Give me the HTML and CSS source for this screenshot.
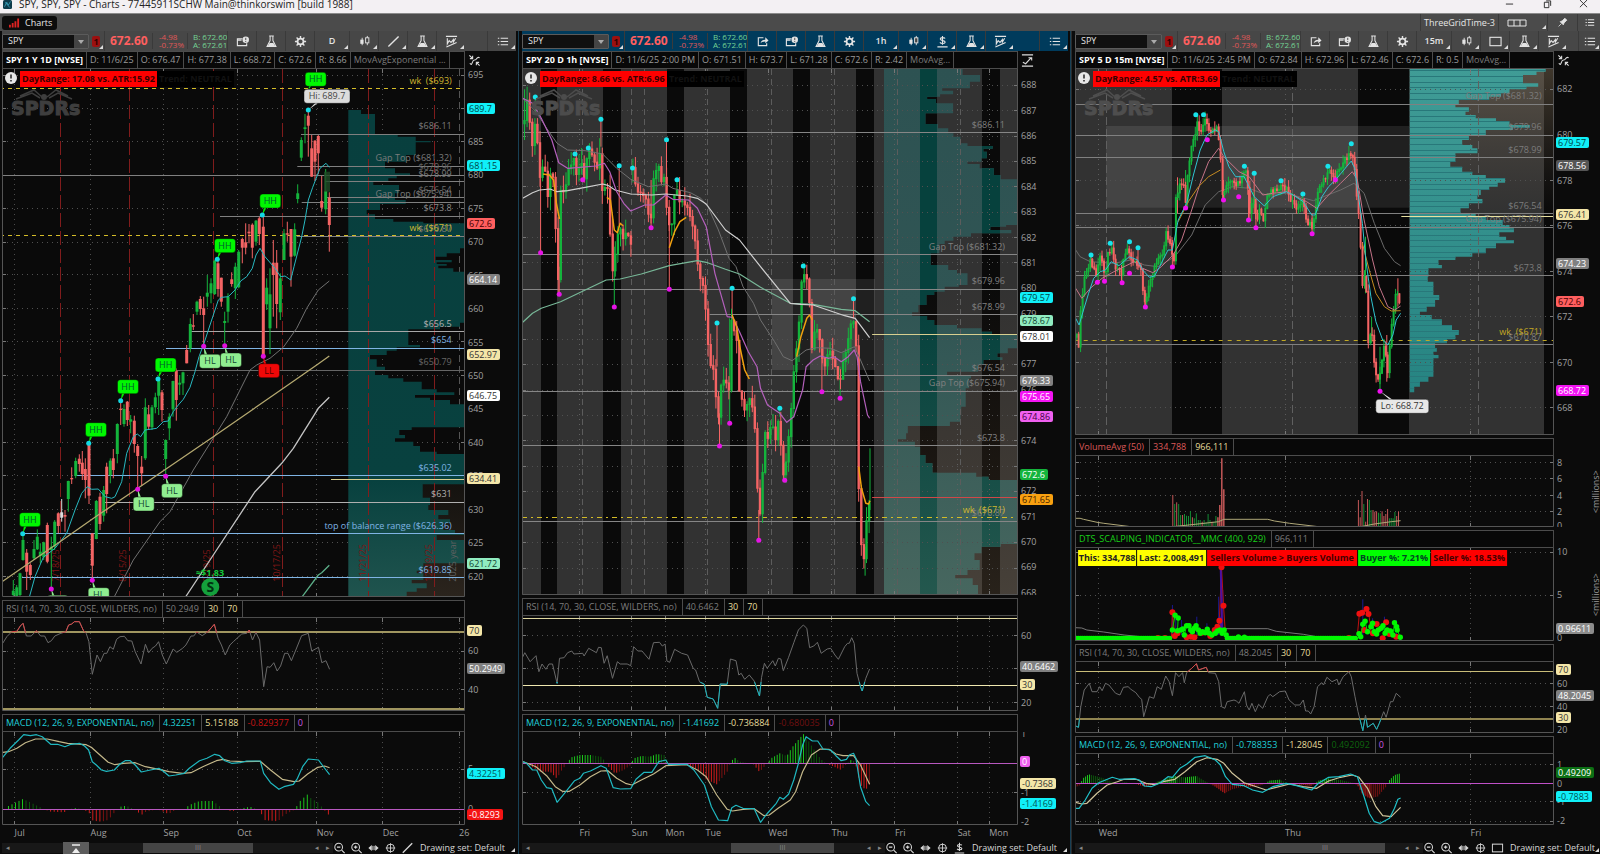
FILE: index.html
```html
<!DOCTYPE html>
<html lang="en">
<head>
<meta charset="utf-8">
<title>Charts</title>
<link rel="stylesheet" href="styles.css">
</head>
<body>
<svg class="defs" aria-hidden="true">
  <symbol id="i-share" viewBox="0 0 14 14"><path d="M8 3H2.500v8.500h9V9" fill="none" stroke="currentColor" stroke-width="1.200"/><path d="M5 9c.3-2.500 2-4 5-4V2.500L13.500 6 10 9V7C8 7 6.300 7.500 5 9z" fill="currentColor"/></symbol>
  <symbol id="i-cal" viewBox="0 0 14 14"><path d="M7 4H1.500v7.500h10V9M1.500 5.500H6" fill="none" stroke="currentColor" stroke-width="1.200"/><circle cx="10.500" cy="5" r="3.500" fill="currentColor"/><path d="M10.500 3v2.500M10 7h1" stroke="#444" stroke-width="1"/></symbol>
  <symbol id="i-flask" viewBox="0 0 14 14"><path d="M4.500 1h5M5.500 1v5L2.200 12.500h9.600L8.500 6V1" fill="none" stroke="currentColor" stroke-width="1.100"/><path d="M5 8.500h4l2.300 4H2.700z" fill="currentColor"/></symbol>
  <symbol id="i-gear" viewBox="0 0 14 14"><circle cx="7" cy="7" r="3.200" fill="none" stroke="currentColor" stroke-width="1.900"/><path d="M7 1v2.200M7 10.800V13M1 7h2.200M10.800 7H13M2.800 2.800l1.500 1.500M9.700 9.700l1.500 1.500M11.200 2.800L9.700 4.300M4.300 9.700l-1.500 1.500" stroke="currentColor" stroke-width="1.500"/></symbol>
  <symbol id="i-candle" viewBox="0 0 14 14"><path d="M4.500 3v8M10 1v10" stroke="currentColor"/><rect x="2.500" y="5" width="3.500" height="4.500" fill="currentColor"/><rect x="8.200" y="3" width="3.500" height="5.500" fill="#444" stroke="currentColor"/></symbol>
  <symbol id="i-line" viewBox="0 0 14 14"><path d="M1.500 12.500l11-11" stroke="currentColor" stroke-width="1.500"/></symbol>
  <symbol id="i-dollar" viewBox="0 0 14 14"><path d="M9.800 3.800C9 2.600 4.600 2.200 4.600 4.400c0 2.200 5.200 1.200 5.200 3.200 0 2.200-4.600 1.800-5.600.4M7 1v9.500M1.500 12.800h11" fill="none" stroke="currentColor" stroke-width="1.200"/></symbol>
  <symbol id="i-rect" viewBox="0 0 14 14"><rect x="1" y="2.500" width="12" height="9" fill="none" stroke="currentColor" stroke-width="1.200"/></symbol>
  <symbol id="i-study" viewBox="0 0 14 14"><path d="M1 1.500h12M2.500 3.500v6l2-3.500 2 2 2.500-3v2.500l2.500-4M1.500 13L12.500 8" fill="none" stroke="currentColor" stroke-width="1.200"/></symbol>
  <symbol id="i-list" viewBox="0 0 14 14"><path d="M5 3.500h8M5 7h8M5 10.500h8M2 3.500h1.500M2 7h1.500M2 10.500h1.500" stroke="currentColor" stroke-width="1.300"/></symbol>
  <symbol id="i-pin" viewBox="0 0 14 14"><path d="M2 12l3.500-3.500M4 6l4 4 1-2.500L12.500 4 10 1.500 6.500 5z" fill="currentColor" stroke="currentColor"/></symbol>
  <symbol id="i-grid" viewBox="0 0 20 10"><path d="M1 2h18v6H1zM7 2v6M13 2v6" fill="none" stroke="currentColor"/></symbol>
  <symbol id="i-out" viewBox="0 0 14 14"><circle cx="6" cy="6" r="4.500" fill="none" stroke="currentColor" stroke-width="1.200"/><path d="M4 6h4M9.500 9.500L13 13" stroke="currentColor" stroke-width="1.300"/></symbol>
  <symbol id="i-in" viewBox="0 0 14 14"><circle cx="6" cy="6" r="4.500" fill="none" stroke="currentColor" stroke-width="1.200"/><path d="M4 6h4M6 4v4M9.500 9.500L13 13" stroke="currentColor" stroke-width="1.300"/></symbol>
  <symbol id="i-pan" viewBox="0 0 14 14"><path d="M1 7l4-3.500v7zM13 7L9 3.500v7z" fill="currentColor"/><path d="M6.200 4.500v5M7.800 4.500v5" stroke="currentColor"/></symbol>
  <symbol id="i-cross" viewBox="0 0 14 14"><circle cx="7" cy="7" r="4.500" fill="none" stroke="currentColor" stroke-width="1.100"/><path d="M7 1.500v11M1.500 7h11" stroke="currentColor"/></symbol>
  <symbol id="i-auto" viewBox="0 0 14 14"><path d="M1.500 1.500L5 5M5 2v3H2M12.500 12.500L9 9M9 12V9h3M2 10c3 4 2-4 5-3.500S9 2 12.500 4" fill="none" stroke="currentColor" stroke-width="1.200"/></symbol>
  <symbol id="i-fit" viewBox="0 0 14 14"><path d="M1 1h12M1 13h12M2 9l3 1.500L11 4M8 4h3.500v3" fill="none" stroke="currentColor" stroke-width="1.200"/></symbol>
</svg>

<header class="titlebar">
  <svg class="appicon" viewBox="0 0 12 12"><rect width="12" height="12" rx="2" fill="#0d3a4a"/><path d="M2 9l3-6 2 4 3-5M3 3l6 7" stroke="#3ba9c4" fill="none"/></svg>
  <h1>SPY, SPY, SPY - Charts - 77445911SCHW Main@thinkorswim [build 1988]</h1>
  <button aria-label="Minimize"><svg viewBox="0 0 10 10"><path d="M1 4.500h8" stroke="#222"/></svg></button>
  <button aria-label="Restore"><svg viewBox="0 0 10 10"><path d="M1.500 2.500h5v6h-5zM3.500 1h5v5.500" fill="none" stroke="#222"/></svg></button>
  <button aria-label="Close"><svg viewBox="0 0 10 10"><path d="M1 0l8 8M9 0L1 8" stroke="#222"/></svg></button>
</header>

<nav class="tabs">
  <button class="tab"><svg viewBox="0 0 12 10"><path d="M1 10V7M4 10V5M7 10V3M10 10V0" stroke="#d22" stroke-width="2"/></svg>Charts</button>
  <button class="layout-name">ThreeGridTime-3</button>
  <button class="layout-grid more" aria-label="Grid layout"><svg viewBox="0 0 20 10"><use href="#i-grid"/></svg></button>
  <button class="layout-btn" aria-label="Pin"><svg viewBox="0 0 14 14"><use href="#i-pin"/></svg></button>
  <button class="layout-btn last-btn" aria-label="Menu"><svg viewBox="0 0 14 14"><use href="#i-list"/></svg></button>
</nav>

<main class="panels">
  <section class="panel left" id="p1">
    <div class="toolbar" data-icons="cal,flask,gear,*D,candle+,line+,flask+,study+"></div>
    <div class="info"><b>SPY 1 Y 1D [NYSE]</b><span>D: 11/6/25</span><span>O: 676.47</span><span>H: 677.38</span><span>L: 668.72</span><span>C: 672.6</span><span>R: 8.66</span><span class="dim">MovAvgExponential ...</span><svg class="scale" viewBox="0 0 14 14"><use href="#i-auto"/></svg></div>
    <svg class="plot f528" data-pane="l0"></svg>
    <div class="info gap"><span class="dim">RSI (14, 70, 30, CLOSE, WILDERS, no)</span><span class="dim">50.2949</span><span class="cream">30</span><span class="cream">70</span></div>
    <svg class="plot f93" data-pane="l1"></svg>
    <div class="info gap"><span class="cyan">MACD (12, 26, 9, EXPONENTIAL, no)</span><span class="cyan">4.32251</span><span class="cream">5.15188</span><span class="red">-0.829377</span><span class="violet">0</span></div>
    <svg class="plot f93" data-pane="l2"></svg>
    <svg class="time" data-pane="l3"></svg>
    <footer class="foot" data-tool="line"></footer>
  </section>

  <section class="panel mid" id="p2">
    <div class="toolbar" data-icons="share,cal,flask,gear,*1h,candle+,dollar+,flask+,study+"></div>
    <div class="info"><b>SPY 20 D 1h [NYSE]</b><span>D: 11/6/25 2:00 PM</span><span>O: 671.51</span><span>H: 673.7</span><span>L: 671.28</span><span>C: 672.6</span><span>R: 2.42</span><span class="dim">MovAvg...</span><svg class="scale" viewBox="0 0 14 14"><use href="#i-fit"/></svg></div>
    <svg class="plot f526" data-pane="m0"></svg>
    <div class="info gap"><span class="dim">RSI (14, 70, 30, CLOSE, WILDERS, no)</span><span class="dim">40.6462</span><span class="cream">30</span><span class="cream">70</span></div>
    <svg class="plot f95" data-pane="m1"></svg>
    <div class="info gap"><span class="cyan">MACD (12, 26, 9, EXPONENTIAL, no)</span><span class="cyan">-1.41692</span><span class="cream">-0.736884</span><span class="darkred">-0.680035</span><span class="violet">0</span></div>
    <svg class="plot f93" data-pane="m2"></svg>
    <svg class="time" data-pane="m3"></svg>
    <footer class="foot" data-tool="dollar"></footer>
  </section>

  <section class="panel right" id="p3">
    <div class="toolbar" data-icons="share,cal,flask,gear,*15m,candle+,rect+,flask+,study+"></div>
    <div class="info"><b>SPY 5 D 15m [NYSE]</b><span>D: 11/6/25 2:45 PM</span><span>O: 672.84</span><span>H: 672.96</span><span>L: 672.46</span><span>C: 672.6</span><span>R: 0.5</span><span class="dim">MovAvg...</span><svg class="scale" viewBox="0 0 14 14"><use href="#i-auto"/></svg></div>
    <svg class="plot f366" data-pane="r0"></svg>
    <div class="info gap"><span class="coral">VolumeAvg (50)</span><span class="coral">334,788</span><span class="cream">966,111</span></div>
    <svg class="plot f71" data-pane="r1"></svg>
    <div class="info gap"><span class="green">DTS_SCALPING_INDICATOR__MMC (400, 929)</span><span class="dim">966,111</span></div>
    <svg class="plot f93" data-pane="r2"></svg>
    <div class="info gap"><span class="dim">RSI (14, 70, 30, CLOSE, WILDERS, no)</span><span class="dim">48.2045</span><span class="cream">30</span><span class="cream">70</span></div>
    <svg class="plot f71" data-pane="r3"></svg>
    <div class="info gap"><span class="cyan">MACD (12, 26, 9, EXPONENTIAL, no)</span><span class="cyan">-0.788353</span><span class="cream">-1.28045</span><span class="darkgreen">0.492092</span><span class="violet">0</span></div>
    <svg class="plot f71" data-pane="r4"></svg>
    <svg class="time" data-pane="r5"></svg>
    <footer class="foot" data-tool="rect"></footer>
  </section>
</main>
<script src="charts.js"></script>
</body>
</html>
```

FILE: styles.css
```css
* { box-sizing: border-box; }
html, body { height: 100%; }
body {
  margin: 0;
  display: flex;
  flex-direction: column;
  overflow: hidden;
  background: #0b0b0b;
  color: #9a9a9a;
  font: 9px/12px "Open Sans", "Noto Sans", sans-serif;
}
button, select { font: inherit; color: inherit; border: 0; padding: 0; margin: 0; background: none; }
.defs { display: none; }

.titlebar { flex: none; height: 13px; background: #f3f0f3; color: #222; display: flex; align-items: flex-start; }
.titlebar h1 { flex: 1; margin: 0; font-size: 10px; font-weight: 400; line-height: 9px; }
.appicon { width: 11px; height: 9px; margin: 0 6px 0 2px; }
.titlebar button { width: 38px; height: 9px; }
.titlebar button:last-child { width: 34px; }
.titlebar button svg { width: 9px; height: 9px; display: block; margin: 0 auto; }

.tabs { flex: none; height: 18px; background: #4b4b4b; border-top: 1px solid #8a8a8a; display: flex; align-items: center; color: #e6e6e6; }
.tab { display: flex; align-items: center; gap: 5px; height: 14px; margin: 0 auto 0 2px; padding: 0 5px 0 7px; border-radius: 3px; background: #0c0c0c; }
.tab svg { width: 11px; height: 10px; }
.layout-name { height: 17px; width: 79px; border-left: 1px solid #3a3a3a; border-right: 1px solid #3a3a3a; }
.layout-grid { width: 48px; height: 17px; text-align: left; padding-left: 8px; }
.layout-grid svg { width: 20px; height: 10px; display: block; }
.layout-btn { width: 30px; height: 17px; border-left: 1px solid #3a3a3a; }
.layout-btn.last-btn { width: 23px; }
.layout-btn svg { width: 11px; height: 11px; display: block; margin: 0 auto; }

.panels { flex: 1; min-height: 0; display: grid; grid-template-columns: 518fr 553fr 529fr; }
.panel { min-width: 0; display: flex; flex-direction: column; --axis: 51px; --line: #4c4c4c; --bar: #474747; }
.left { padding: 0 2px; }
.mid { border-left: 1px solid #184055; border-right: 1px solid #184055; padding: 0 2px 0 3px; --bar: #003b5c; --axis: 50px; }
.right { padding-left: 3px; --axis: 46px; border-left: 1px solid #2b2b2b; }

.toolbar { flex: none; height: 20px; display: flex; align-items: center; background: var(--bar); color: #e4e4e4; }
.symbol { flex: none; width: 87px; height: 15px; display: flex; border: 1px solid #5b5b5b; border-radius: 1px; background: #101010; }
.symbol select { flex: 1; appearance: none; padding-left: 5px; text-align: left; outline: 0; }
.symbol svg { width: 14px; height: 13px; background: #444; }
.link { flex: none; width: 16px; height: 20px; padding: 0 4px 0 3px; position: relative; border-right: 1px solid #3a3a3a; }
.link i { display: block; height: 11px; border-radius: 2px; background: #9b1010; color: #300; font: 700 9px/11px "Open Sans", sans-serif; text-align: center; }
.last { flex: none; width: 47px; padding-left: 5px; color: #ff5f5f; font-size: 12px; font-weight: 700; }
.chg { flex: none; width: 35px; padding-left: 6px; color: #e05858; font-size: 8px; line-height: 8px; border-left: 1px solid #3a3a3a; }
.quote { flex: none; width: 40px; padding-left: 5px; color: #74d494; font-size: 8px; line-height: 8px; border-left: 1px solid #3a3a3a; white-space: nowrap; }
.tool { flex: 0 1 29px; height: 20px; position: relative; border-left: 1px solid #3a3a3a; font-weight: 600; display: grid; place-items: center; }
.tool.period { flex-basis: 35px; }
.tool svg { width: 13px; height: 13px; display: block; }
.menu { margin-left: auto; }
.right .menu { flex-basis: 22px; }
.more { position: relative; }
.more::after { content: ""; position: absolute; right: 1px; bottom: 2px; border: solid transparent; border-width: 0 0 4px 4px; border-bottom-color: #ddd; }

.info { flex: none; height: 18px; margin-right: var(--axis); display: flex; border: 1px solid var(--line); background: #080808; white-space: nowrap; position: relative; }
.info > span, .info > b { padding: 0 3px; line-height: 16px; border-right: 1px solid var(--line); }
.info b { color: #fff; }
.gap { margin-top: 3px; }
.gap > span { padding: 0 5px 0 3px; }
.scale { position: absolute; left: calc(100% + 4px); top: 2px; width: 13px; height: 13px; color: #ddd; }
.info .dim { color: #7c7c7c; }
.cream { color: #e6dc9c; }
.cyan { color: #20d0d8; }
.red { color: #c81414; }
.darkred { color: #701010; }
.violet { color: #c858e0; }
.coral { color: #dc5858; }
.green { color: #18d018; }
.darkgreen { color: #0e640e; }

.plot { display: block; width: 100%; min-height: 0; flex-basis: 0; }
.f528 { flex-grow: 528; } .f526 { flex-grow: 526; } .f366 { flex-grow: 366; }
.f95 { flex-grow: 95; } .f93 { flex-grow: 93; } .f71 { flex-grow: 71; }
.time { flex: none; display: block; width: 100%; height: 17px; }
.plot text, .time text { font-family: "Open Sans", "Noto Sans", sans-serif; font-size: 9px; }
.plot .logo { font-family: "DejaVu Sans", sans-serif; font-size: 19px; font-weight: 700; }
.plot .bold { font-weight: 700; }
.plot .coin { font-size: 14px; font-weight: 700; }

.foot { flex: none; height: 12px; display: flex; align-items: center; color: #d8d8d8; }
.track { flex: 1; height: 10px; background: #181818; display: flex; align-items: center; }
.track.steps { flex: none; }
.track button { flex: none; color: #888; font-size: 7px; width: 11px; height: 10px; line-height: 8px; }
.thumb { flex: none; height: 10px; background: #454545; color: #888; font-size: 7px; line-height: 9px; text-align: center; }
.track .jump { width: 26px; height: 12px; background: #5c5c5c; display: grid; place-items: center; margin: 0 54px 0 50px; }
.jump svg { width: 10px; height: 10px; }
.foot .zoom { flex: none; width: 17px; height: 12px; }
.foot .zoom svg { width: 13px; height: 12px; display: block; }
.foot .drawing { flex: none; width: 90px; margin-left: 2px; text-align: left; white-space: nowrap; line-height: 12px; }
.left .foot .drawing, .mid .foot .drawing { width: 96px; }
```

FILE: charts.js
```js
const NS = 'http://www.w3.org/2000/svg';

/* ---------- toolbars and footers ---------- */
const icon = n => `<svg viewBox="0 0 14 14"><use href="#i-${n}"/></svg>`;
document.querySelectorAll('.toolbar').forEach(bar => {
  const tools = bar.dataset.icons.split(',').map(t => {
    if (t[0] === '*') return `<button class="tool period more">${t.slice(1)}</button>`;
    const more = t.endsWith('+'), n = t.replace('+', '');
    return `<button class="tool${more ? ' more' : ''}" aria-label="${n}">${icon(n)}</button>`;
  }).join('');
  bar.innerHTML = `<label class="symbol"><select aria-label="Symbol"><option>SPY</option></select><svg viewBox="0 0 14 13"><path d="M4 5h6l-3 4z" fill="#aaa"/></svg></label>
    <button class="link more" aria-label="Link"><i>1</i></button><span class="last">672.60</span>
    <span class="chg">-4.98<br>-0.73%</span><span class="quote">B: 672.60<br>A: 672.61</span>${tools}
    <button class="tool menu more" aria-label="menu">${icon('list')}</button>`;
});
const SCROLL = { line: [0, 110], dollar: [198, 103], rect: [179, 120] };
document.querySelectorAll('.foot').forEach(f => {
  const [m, w] = SCROLL[f.dataset.tool];
  const jump = f.dataset.tool === 'line'
    ? '<button class="jump" aria-label="Expand"><svg viewBox="0 0 10 10"><path d="M1 2h8" stroke="#eee" stroke-width="1.500"/><path d="M5 5l4 5H1z" fill="#eee"/></svg></button>' : '';
  const thumb = `<div class="thumb" style="width:${w}px;margin-left:${m}px">III</div>`;
  f.innerHTML = `<div class="track"><button aria-label="Left">◂</button>${jump}${thumb}</div>
    <div class="track steps"><button aria-label="Step left">◂</button><button aria-label="Step right">▸</button></div>
    ${['out', 'in', 'pan', 'cross', f.dataset.tool].map(n => `<button class="zoom" aria-label="${n}">${icon(n)}</button>`).join('')}
    <button class="drawing more">Drawing set: Default</button>`;
});

/* ---------- drawing surface ---------- */
let seed = 7;
const rnd = () => (seed = (seed * 16807) % 2147483647) / 2147483647;
const crisp = (v, w = 1) => Math.floor(+v) + (w % 2 ? .5 : 0);

/* box: page extent [x, y, w, h]; plotW: width left of the price axis; unit: data frame [ox, oy, sx] */
function surface(svg, box, plotW, unit) {
  const r = svg.getBoundingClientRect();
  const kx = r.width / box[2], ky = r.height / box[3];
  const X = v => ((unit[0] + v / unit[2] - box[0]) * kx).toFixed(1);
  const Y = v => ((unit[1] + v / 3 - box[1]) * ky).toFixed(1);
  const pw = Math.round(plotW * kx);
  const id = svg.dataset.pane;
  let plot = '', axis = '';
  const s = {
    X, Y, pw, W: r.width, H: r.height,
    raw(t) { plot += t; },
    over(t) { axis += t; },
    rect(x1, y1, x2, y2, fill, o = 1) { const a = Math.round(X(x1)), b = Math.round(X(x2)); plot += `<rect x="${a}" y="${Y(y1)}" width="${b - a}" height="${Math.max(1, Y(y2) - Y(y1)).toFixed(1)}" fill="${fill}" opacity="${o}"/>`; },
    line(x1, y1, x2, y2, c, w = 1, d = '') {
      const a = y1 === y2 ? crisp(Y(y1), w) : Y(y1), b = y1 === y2 ? a : Y(y2);
      plot += `<path d="M${X(x1)} ${a}L${X(x2)} ${b}" stroke="${c}" stroke-width="${w}" stroke-dasharray="${d}"/>`;
    },
    poly(p, c, w = 1, extra = '') { let d = ''; for (let i = 0; i < p.length; i += 2) d += (i ? 'L' : 'M') + X(p[i]) + ' ' + Y(p[i + 1]); plot += `<path d="${d}" fill="none" stroke="${c}" stroke-width="${w}" stroke-linejoin="round" ${extra}/>`; },
    text(t, x, y, c, a = 'start', extra = '') { plot += `<text x="${X(x)}" y="${+Y(y) + 3}" fill="${c}" text-anchor="${a}" ${extra}>${t}</text>`; },
    dots(p, c, rad = 2) { for (let i = 0; i < p.length; i += 2) plot += `<circle cx="${X(p[i])}" cy="${Y(p[i + 1])}" r="${rad}" fill="${c}"/>`; },
    hgrid(ys) { ys.forEach(v => { const y = crisp(Y(v)); plot += `<path d="M0 ${y}H${pw}" stroke="#505050" stroke-dasharray="1 4"/><path d="M0 ${y}h4M${pw - 4} ${y}h4" stroke="#777"/>`; }); },
    vgrid(xs, c = '#4c4c4c', d = '1 4') { xs.forEach(v => { const x = crisp(X(v)); plot += `<path d="M${x} 0V${r.height}" stroke="${c}" stroke-dasharray="${d}"/>`; if (d === '1 4') plot += `<path d="M${x} 0v4M${x} ${r.height - 4}v4" stroke="#777"/>`; }); },
    label(t, y) { axis += `<text x="${pw + 3}" y="${+Y(y) + 3}" fill="#a0a0a0">${t}</text>`; },
    tag(t, y, bg, fg) {
      const w = [...t].reduce((a, ch) => a + (ch === '.' ? 2.4 : ch === '-' ? 2.9 : 5.15), 0) + 5;
      axis += `<rect x="${pw + 2}" y="${Math.round(Y(y)) - 6}" width="${w.toFixed(0)}" height="11" rx="2" fill="${bg}"/><text x="${pw + 4}" y="${Math.round(Y(y)) + 3}" fill="${fg}">${t}</text>`;
    },
    end() {
      svg.innerHTML = `<defs><clipPath id="c-${id}"><rect width="${pw}" height="${r.height}"/></clipPath></defs>
        <g clip-path="url(#c-${id})">${plot}</g><path d="M.5 0V${r.height - .5}H${pw - .5}V0" fill="none" stroke="#555"/>${axis}`;
    }
  };
  return s;
}

const RED = '#f46464', GREEN = '#14b43c';
function candle(s, x, hi, lo, top, bot, up, w) {
  const c = up === 'w' ? '#ddd' : up === 'g' ? GREEN : RED, px = +s.X(x);
  s.raw(`<path d="M${px} ${s.Y(hi)}V${s.Y(lo)}" stroke="${c}"/><rect x="${(px - w / 2).toFixed(1)}" y="${s.Y(top)}" width="${w}" height="${Math.max(1, s.Y(bot) - s.Y(top)).toFixed(1)}" fill="${c}"/>`);
}
function at(p, x) {
  for (let i = 0; i < p.length - 2; i += 2) if (x <= p[i + 2]) return p[i + 1] + (p[i + 3] - p[i + 1]) * (x - p[i]) / (p[i + 2] - p[i]);
  return p[p.length - 1];
}
function walk(s, p, step, w, noise, wick) {
  let prev = p[1];
  for (let x = p[0]; x <= p[p.length - 2] + 1; x += step) {
    const c = at(p, x) + (rnd() - .5) * noise;
    const top = Math.min(prev, c), bot = Math.max(prev, c) + 3;
    candle(s, x, top - rnd() * wick, bot + rnd() * wick, top, bot, c < prev ? 'g' : 'r', w);
    prev = c;
  }
}
function hist(s, p, base, step) {
  let prev = base;
  for (let x = p[0]; x <= p[p.length - 2]; x += step) {
    const y = at(p, x), grow = Math.abs(y - base) >= Math.abs(prev - base) - .5;
    if (Math.abs(y - base) > .5) s.line(x, base, x, y, y < base ? (grow ? '#1cc41c' : '#0c560c') : (grow ? '#d01c1c' : '#7c1212'));
    prev = y;
  }
}
function profile(s, x0, p, end, fill) {
  let d = `M${s.X(x0)} ${s.Y(p[0])}`;
  for (let i = 0; i < p.length; i += 2) d += `H${s.X(p[i + 1])}V${s.Y(i + 2 < p.length ? p[i + 2] : end)}`;
  s.raw(`<path d="${d}H${s.X(x0)}Z" fill="${fill}"/>`);
}
function zones(s, p, lo, hi) {
  s.poly(p, '#6a6a6a');
  const id = 'z' + Math.round(lo * 7 + hi * 3);
  if (hi) { s.raw(`<clipPath id="${id}h"><rect width="2000" height="${s.Y(hi)}"/></clipPath>`); s.poly(p, '#d84848', 1, `clip-path="url(#${id}h)"`); }
  if (lo) { s.raw(`<clipPath id="${id}l"><rect width="2000" height="500" y="${s.Y(lo)}"/></clipPath>`); s.poly(p, '#18b4bc', 1, `clip-path="url(#${id}l)"`); }
}
function balloon(s, t, x, y, ax, ay, bg, fg, w = 21) {
  const cx = +s.X(x), cy = +s.Y(y);
  s.raw(`<path d="M${cx - 5} ${cy}L${s.X(ax)} ${s.Y(ay)}L${cx} ${cy}z" fill="${bg}"/><rect x="${cx - w / 2}" y="${cy - 7}" width="${w}" height="14" rx="3" fill="${bg}" stroke="#0006"/><text x="${cx}" y="${cy + 3}" text-anchor="middle" fill="${fg}">${t}</text>`);
}
function brand(s, x, range, wRed, g) {
  s.raw(`<g fill="none" stroke="${g}" stroke-width="1.500"><path d="M${x + 18} 27L${x + 32} 21 ${x + 40} 28M${x + 14} 30L${x + 30} 24 ${x + 38} 29M${x + 66} 27L${x + 54} 21 ${x + 45} 28M${x + 70} 30L${x + 56} 24 ${x + 47} 29"/></g><circle cx="${x + 42}" cy="28" r="3" fill="${g}"/>
    <text class="logo" x="${x + 9}" y="46" fill="${g}" stroke="${g}">SPDRs</text>
    <rect x="${x + 17 + wRed}" y="2" width="78" height="16" fill="#000"/><text class="bold" x="${x + 20 + wRed}" y="13" fill="#121212">Trend: NEUTRAL</text>
    <rect x="${x + 18}" y="2" width="${wRed}" height="16" fill="#f00"/><text class="bold" x="${x + 20}" y="13" fill="#3a0000">${range}</text>
    <circle cx="${x + 9}" cy="9" r="6" fill="#e8e8e8"/><path d="M${x + 9} 5.500v4M${x + 9} 11v1.500" stroke="#222" stroke-width="1.500"/>`);
}
const series = (s, y0, step, list) => list.forEach((v, i) => v && s.label(v, y0 + i * step));

/* ---------- data: left panel ---------- */
const L_HIGH = `560,735,790,750,790,r 571,655,757,672,745,g 580,642,690,676,680,r 591,602,645,605,635,g 601,588,645,597,627,r 611,590,740,625,645,r 622,525,620,578,590,g 633,535,610,550,580,g 644,480,585,482,582,g 654,480,590,490,567,r 664,533,620,533,605,r 674,635,735,663,669,g 684,580,668,590,635,g 695,517,560,538,552,r 706,488,597,500,565,g 716,450,565,455,562,g 727,413,490,417,443,r 737,370,463,427,443,r 747,372,430,395,400,r 757,370,475,374,443,r 768,360,437,362,425,g 778,350,435,355,402,r 790,345,775,380,770,r 800,535,630,563,613,g 810,505,762,583,685,g 820,420,650,488,525,r 830,450,685,488,612,r 841,520,660,535,637,g 852,387,480,400,480,g 862,365,425,400,404,r 873,387,560,387,470,r 884,370,470,388,467,g 893,253,310,280,297,g 904,112,183,120,173,g 915,42,130,82,87,g 925,30,170,47,77,r 935,105,230,145,230,r 945,120,243,122,185,r 955,105,223,108,160,r 965,228,335,303,323,r 977,207,343,273,328,g 988,277,455,293,375,r`;
const L_LOW = `40,690,742,722,735,g 50,705,742,712,742,g 60,668,740,670,735,g 69,552,632,570,630,g 80,597,720,608,665,r 91,640,690,645,675,r 102,570,630,597,625,g 112,538,600,560,598,g 121,580,640,605,618,g 131,575,630,577,622,g 142,518,640,525,635,r 154,560,715,590,600,g 164,510,600,515,590,g 175,487,550,490,528,r 185,447,515,487,503,w 195,480,545,495,500,r 205,392,485,393,447,g 215,352,402,384,388,r 227,323,385,333,378,g 238,313,365,326,342,r 247,303,390,338,372,r 256,325,445,357,390,r 267,282,462,285,437,r 277,550,692,550,647,r 289,450,568,453,567,g 300,428,540,440,522,r 311,408,515,420,497,g 320,338,490,350,432,r 331,325,400,332,375,g 340,297,385,325,360,r 352,220,340,222,312,g 362,155,225,176,180,r 372,163,230,177,222,g 382,153,228,155,210,r 392,195,250,208,215,g 403,197,308,212,282,r 413,282,418,288,318,r 425,318,408,350,370,r 436,145,330,172,325,g 446,165,240,193,230,r 456,165,240,172,232,g 466,128,190,142,172,g 476,88,195,92,137,g 486,120,215,127,180,r 497,268,378,270,327,g 508,190,270,200,235,g 519,92,200,93,178,g 529,55,212,62,150,r 539,75,135,98,104,g 549,65,135,67,100,g`;
const L_PROFILE = [30,1083,42,1125,103,1193,110,1247,123,1292,127,1247,165,1218,185,1155,205,1185,220,1230,228,1190,235,1165,245,1120,255,1197,280,1185,300,1217,312,1140,330,1100,343,1125,357,1180,365,1270,370,1393,445,1380,460,1340,470,1307,480,1355,487,1310,492,1340,497,1315,505,1360,515,1393,668,1380,680,1320,688,1225,735,1260,742,1190,752,1160,765,1110,778,1130,800,1155,812,1125,825,1165,835,1210,845,1265,868,1310,877,1363,885,1245,893,1290,900,1350,913,1393,982,1235,990,1198,1005,1215,1015,1185,1025,1240,1038,1260,1055,1310,1062,1393,1153,1268,1193,1290,1215,1285,1230,1345,1245,1315,1258,1350,1270,1330,1290,1365,1300,1393,1305,1310,1320,1393,1390,1270,1412,1250,1420,1270,1440,1235,1450,1280,1465,1250,1475,1220];
const L_VERT = [44, 272, 490, 712, 950, 1148];
const L6_VERT = [43, 268, 484, 702, 937, 1132, 1358];

function left() {
  const q = p => document.querySelector(`[data-pane=${p}]`);
  let s = surface(q('l0'), [2, 69, 514, 528], 463, [0, 100, 3]);
  s.rect(0, -100, 1400, 1500, '#0a0a0a');
  s.hgrid([-75, 25, 125, 326, 427, 524, 626, 724, 826, 925, 1027, 1127, 1228, 1328, 1428]);
  s.vgrid(L_VERT); s.vgrid([1378], '#555', '7 4');
  s.raw(`<linearGradient id="gl" x2="0" y2="1"><stop offset="0" stop-color="#083f3e"/><stop offset=".76" stop-color="#08413f"/><stop offset="1" stop-color="#20544e"/></linearGradient><linearGradient id="gb" x2="0" y2="1"><stop offset="0" stop-color="#14120f"/><stop offset="1" stop-color="#2b241d"/></linearGradient>`);
  s.rect(1200, 1150, 1393, 1492, 'url(#gb)');
  profile(s, 1045, L_PROFILE, 1495, 'url(#gl)');
  s.vgrid([180, 388, 640, 848, 1105, 1304], '#801c1c', '14 4');
  [['7/18/25', 168], ['8/15/25', 370], ['9/19/25', 620], ['10/17/25', 830], ['11/21/25', 1088], ['12/19/25', 1288]].forEach(([t, x]) =>
    s.raw(`<text transform="translate(${+s.X(x) + 3} ${s.Y(1445)}) rotate(-90)" fill="#801616">${t}</text>`));
  s.raw(`<text transform="translate(${+s.X(1358) + 3} ${s.Y(1445)}) rotate(-90)" fill="#606060">2025 year</text>`);
  const g = '#808080', b = '#7fb4e4';
  [[903,103,g],[892,199,g],[6,226,g],[975,245,g],[975,292,g],[905,306,g],[660,349,g],[890,408,g],[570,694,'#a8a8a8'],[498,745,b],[530,811,'#666'],[225,1127,b],[310,1208,'#b0b0b0'],[66,1300,b],[66,1432,b],[993,1138,'#d8cf90']].forEach(l => s.line(l[0], l[1], 1395, l[1], l[2]));
  s.line(0, 406, 1395, 406, '#d4bc28', 1, '4 4'); s.line(0, -35, 1395, -35, '#d4bc28', 1, '4 4');
  L_HIGH.split(' ').forEach(r => { const v = r.split(','); candle(s, ...v.slice(0, 5).map(Number), v[5], 3); });
  L_LOW.split(' ').forEach(r => { const v = r.split(','), n = v.slice(0, 5).map(Number); candle(s, n[0], n[1] + 750, n[2] + 750, n[3] + 750, n[4] + 750, v[5], 3); });
  s.rect(973, 215, 989, 275, '#1f4a26', .8);
  s.poly([88,1492,105,1430,130,1372,165,1345,200,1300,225,1230,245,1180,262,1160,275,1168,295,1167,315,1190,335,1195,345,1190,365,1145,380,1060,400,1010,412,1002,422,1010,435,990,470,985,490,965,505,963,520,935,535,915,550,898,570,862,585,815,597,770,612,730,630,675,655,600,665,592,685,590,705,570,722,543,740,530,757,505,768,465,780,445,795,470,825,505,842,530,855,528,872,540,882,500,905,410,915,360,925,300,938,262,960,205,978,190,988,202], '#28b8c0');
  s.poly([342,1492,400,1380,480,1265,510,1235,580,1110,680,950,750,810,770,795,810,775,850,742,890,685,920,625,955,570,988,543], '#707070');
  s.poly([6,1445,180,1325,290,1248,420,1160,640,1010,850,865,950,795,988,768], '#b5a970', 1.3);
  s.poly([556,1492,640,1365,765,1175,845,1090,880,1045,955,925,988,892], '#c4c4c4', 1.3);
  s.poly([905,1492,955,1425,965,1418,988,1396], '#5cae88', 1.3);
  [['$686.11',79,'#7c7c7c'],['Gap Top ($681.32)',174,'#7c7c7c'],['$679.96',202,'#6a6a6a'],['$678.99',222,'#7c7c7c'],['$676.54',269,'#6a6a6a'],['Gap Top ($675.94)',283,'#7c7c7c'],['$673.8',325,'#8a8a8a'],['$670.87',387,'#777'],['wk&#160; ($671)',383,'#d0b830'],['wk&#160; ($693)',-57,'#d0b830'],['$656.5',671,'#b0b0b0'],['$654',721,b],['$650.79',787,'#666'],['$635.02',1103,b],['$631',1183,'#b0b0b0'],['top of balance range ($626.36)',1277,b],['$619.85',1409,b]].forEach(l => s.text(l[0], 1355, l[1], l[2], 'end'));
  const hh = [[675,437,652,478],[811,303,787,345],[497,795,474,837],[384,860,362,902],[288,989,266,1030],[90,1259,68,1301]];
  const hl = [[630,784,611,739],[693,780,674,737],[516,1172,497,1129],[431,1212,413,1168],[296,1484,277,1441],[173,1507,154,1467]];
  hh.forEach(v => balloon(s, 'HH', ...v, '#00f800', '#053'));
  balloon(s, 'HH', 947, -62, 925, -30, '#00f800', '#053');
  balloon(s, 'Hi: 689.7', 981, -11, 925, 30, '#dcdcdc', '#444', 46);
  hl.forEach(v => balloon(s, 'HL', ...v, '#90ee90', '#143'));
  balloon(s, 'LL', 807, 812, 790, 769, '#f00808', '#500');
  s.dots(hh.flatMap(v => v.slice(2)).concat(925, 30), '#14d8e4', 2.5);
  s.dots(hl.flatMap(v => v.slice(2)).concat(790, 769), '#e010e0', 2.5);
  s.dots([631, 1461], '#14a03c', 9);
  s.raw(`<text class="coin" x="${s.X(631)}" y="${+s.Y(1461) + 5}" text-anchor="middle" fill="#031">S</text>`);
  s.text('≈$1.83', 630, 1419, '#14c83c', 'middle', 'class="bold"');
  brand(s, 0, 'DayRange: 17.08 vs. ATR:15.92', 137, '#3e3e3e');
  series(s, -75, 100.3, ['695', '', '685', '680', '675', '670', '665', '660', '655', '650', '645', '640', '635', '630', '625', '620']);
  s.tag('689.7', 27, '#10f0f8', '#044'); s.tag('681.15', 198, '#10f0f8', '#044'); s.tag('672.6', 371, '#ff5f5f', '#400');
  s.tag('664.14', 539, '#808080', '#fff'); s.tag('652.97', 764, '#f4e6a8', '#333'); s.tag('646.75', 887, '#fff', '#333');
  s.tag('634.41', 1136, '#f4e6a8', '#333'); s.tag('621.72', 1392, '#90ecc0', '#143');
  s.end();

  s = surface(q('l1'), [2, 618, 514, 93], 463, [0, 590, 2.958]);
  s.hgrid([184, 298]); s.vgrid(L6_VERT);
  s.line(0, 126, 1378, 126, '#a09660', 2); s.line(0, 357, 1378, 357, '#a09660', 2);
  zones(s, [8,160,20,140,35,125,50,124,60,108,68,100,78,138,92,138,108,122,120,138,132,138,142,158,152,152,162,138,180,130,195,125,203,105,212,102,220,95,235,95,247,122,255,130,263,155,273,253,287,195,297,215,308,190,316,190,325,170,335,178,345,148,355,140,368,139,378,152,390,153,400,185,417,222,430,163,440,188,450,175,460,168,469,155,480,195,492,222,512,177,523,187,540,175,550,165,565,138,573,138,582,126,598,137,615,125,634,103,645,145,655,165,666,195,680,165,690,155,715,132,730,130,737,120,747,150,757,127,768,150,780,290,790,230,799,232,810,218,820,243,830,228,842,190,852,190,862,212,875,180,892,137,912,130,922,183,942,172,952,218,964,212,975,238], 0, 128);
  s.label('60', 184); s.label('40', 300);
  s.tag('70', 123, '#f4e6a8', '#333'); s.tag('50.2949', 236, '#808080', '#fff');
  s.end();

  s = surface(q('l2'), [2, 732, 514, 93], 463, [0, 590, 2.958]);
  s.hgrid([537]); s.vgrid(L6_VERT);
  hist(s, [25,648,45,638,68,627,90,637,125,655,150,665,190,667,205,657,225,654,240,657,250,660,265,670,275,692,300,695,320,690,345,660,360,648,375,648,395,657,410,668,418,675,430,666,455,660,465,657,485,666,498,672,510,665,525,657,545,657,560,645,590,633,630,633,645,645,660,657,685,664,700,660,715,655,740,650,760,657,770,662,780,690,800,692,822,694,840,675,870,660,890,630,910,613,920,625,945,640,955,657,975,677], 657, 10.4);
  s.line(0, 657, 1378, 657, '#b858c0');
  s.poly([8,487,25,485,50,475,75,458,105,447,140,447,175,455,200,460,255,464,270,472,290,490,320,517,340,524,365,520,400,518,430,530,470,538,500,545,540,550,565,548,600,530,640,512,660,508,680,513,720,515,770,514,800,540,835,568,870,575,885,573,910,552,940,532,960,528,975,533], '#c4b88a', 1.2);
  s.poly([8,502,30,475,55,450,70,434,90,437,108,434,125,440,150,463,170,463,192,470,210,463,235,460,250,468,262,480,273,515,285,525,300,540,315,544,338,540,355,522,370,512,385,512,400,525,418,546,445,540,470,535,485,545,500,558,520,555,545,550,560,535,590,512,612,505,635,493,650,497,665,512,685,520,710,518,730,513,770,513,780,550,800,578,825,598,840,590,868,583,880,565,895,530,912,507,942,510,955,528,975,554], '#20b8c0', 1.2);
  s.label('5', 537); s.label('0', 657);
  s.tag('4.32251', 552, '#10f0f8', '#055'); s.tag('-0.8293', 675, '#f41414', '#fff');
  s.end();

  s = surface(q('l3'), [2, 825, 514, 17], 514, [0, 590, 2.958]);
  [['Jul', 43], ['Aug', 268], ['Sep', 484], ['Oct', 702], ['Nov', 937], ['Dec', 1132], ['26', 1358]].forEach(l => s.text(l[0], l[1], 730, '#a0a0a0'));
  finishTime(q('l3'), s);
}
function finishTime(svg, s) { s.end(); svg.querySelector('g + path').remove(); }

/* ---------- middle panel ---------- */
const M_VERT = [184, 333, 429, 543, 723, 903, 1083, 1262, 1352];
function middle() {
  const q = p => document.querySelector(`[data-pane=${p}]`);
  let s = surface(q('m0'), [522, 69, 546, 526], 496, [515, 80, 2.851]);
  s.rect(0, -40, 1440, 1560, '#323232');
  [[73,121],[251,302],[432,482],[613,662],[793,841],[972,1023],[1155,1203],[1331,1383]].forEach(b => s.rect(b[0], -40, b[1], 1560, '#0a0a0a'));
  s.rect(733, 597, 1025, 870, '#fff', .09);
  s.raw(`<linearGradient id="mb" x2="0" y2="1"><stop offset="0" stop-color="#7a5a3a" stop-opacity="0"/><stop offset=".5" stop-color="#7a5a3a" stop-opacity=".13"/><stop offset="1" stop-color="#8a7050" stop-opacity=".24"/></linearGradient><linearGradient id="mt" x2="0" y2="1"><stop offset="0" stop-color="#2d5252"/><stop offset=".45" stop-color="#305554"/><stop offset="1" stop-color="#47675f"/></linearGradient><linearGradient id="md" x2="0" y2="1"><stop offset="0" stop-color="#06413d"/><stop offset=".45" stop-color="#06413d"/><stop offset="1" stop-color="#24584e"/></linearGradient>`);
  s.rect(1052, 600, 1440, 1560, 'url(#mb)');
  const prof = [-40,1276,-15,1326,5,1297,25,1218,32,1249,43,1212,50,1175,57,1200,70,1249,100,1170,132,1206,145,1235,160,1250,170,1270,190,1290,198,1362,206,1335,215,1345,235,1330,245,1290,252,1325,265,1365,285,1385,298,1434,435,1400,440,1355,450,1415,460,1300,470,1250,482,1225,492,1210,520,1185,555,1235,570,1260,580,1290,615,1265,620,1225,635,1195,645,1173,675,1150,697,1132,708,1175,720,1195,735,1260,745,1330,755,1360,765,1434,805,1405,820,1375,832,1390,840,1335,855,1320,875,1232,885,1300,895,1295,925,1285,980,1272,1005,1270,1025,1240,1038,1120,1060,1115,1078,1090,1085,1140,1100,1155,1125,1170,1150,1190,1178,1315,1190,1350,1200,1434,1392,1385,1400,1330,1420,1310,1440,1325,1470,1290,1485,1255,1495,1305,1515,1320];
  profile(s, 1052, prof, 1560, 'url(#mt)');
  s.raw(`<clipPath id="mband"><rect x="${Math.round(s.X(1155))}" width="${Math.round(s.X(1203) - s.X(1155))}" height="900"/><rect x="${Math.round(s.X(1331))}" width="${Math.round(s.X(1383) - s.X(1331))}" height="900"/></clipPath><g clip-path="url(#mband)">`);
  profile(s, 1052, prof, 1560, 'url(#md)'); s.raw('</g>');
  s.hgrid([16, 91, 168, 244, 320, 397, 473, 548, 777, 854, 930, 1006, 1082, 1159, 1234, 1388, 1464]);
  s.vgrid([184, 543, 723, 903, 1083, 1262, 1352], '#606060'); s.vgrid([191, 333, 370, 550, 731, 910, 1091, 1270], '#5c5c5c', '6 4');
  [[20,158],[20,524],[20,627],[555,703],[660,887],[20,934],[20,1096],[20,1324]].forEach(l => s.line(l[0], l[1], 1440, l[1], '#868686'));
  s.line(20, 1312, 1440, 1312, '#d4bc28', 1, '5 4 2 4');
  s.line(1018, 764, 1440, 764, '#d8cf90'); s.line(1018, 1251, 1440, 1251, '#d04848');
  const wicks = [73,250,518,RED,245,118,200,RED,283,500,681,GREEN,297,257,440,RED,432,179,300,RED,440,430,628,RED,126,560,643,RED,576,729,860,RED,583,1000,1098,RED,612,715,1030,GREEN,619,625,720,RED,695,1290,1381,RED,755,985,1010,GREEN,769,1150,1201,GREEN,875,800,935,RED,927,860,955,GREEN,965,656,715,RED,1012,1105,1290,GREEN,998,1400,1487,GREEN,388,300,443,RED,27,28,180,GREEN,58,51,100,GREEN];
  for (let i = 0; i < wicks.length; i += 4) s.line(wicks[i], wicks[i + 1], wicks[i], wicks[i + 2], wicks[i + 3]);
  seed = 11;
  walk(s, [27,130,33,60,40,100,48,210,55,150,62,100,68,340,75,250,88,280,93,360,100,290,110,290,116,440,124,625,130,320,140,330,150,280,158,250,168,225,176,280,190,240,197,290,210,210,222,230,233,270,243,200,250,350,262,290,270,440,280,600,288,500,296,430,305,470,315,460,330,490], 7.4, 2.4, 20, 45);
  walk(s, [336,265,345,320,355,340,372,350,387,430,396,290,410,260,420,310,428,285,435,430,446,440,453,340,462,330,470,360,480,370,495,385,505,440,515,480,525,590,540,620,547,770,555,840,568,880,578,1040,590,890,605,900,612,930,617,715,625,745,632,770,638,920,655,990,670,960,682,1000,690,1210,698,1300,705,1190,715,1040,722,1090,733,1020,742,1080,752,1010,766,1190,778,1090,790,960,798,830,808,760,815,620,825,580,838,610,843,815,860,735,870,780,880,870,890,830,900,800,910,850,922,910,930,880,940,820,950,770,962,710,972,745,975,1070,983,1315,990,1440,997,1445,1003,1290,1010,1270,1013,1190], 7.4, 2.4, 20, 40);
  s.poly([22,55,60,95,90,145,120,190,150,210,200,212,250,222,290,265,330,298,380,320,430,312,450,325,500,338,530,355,550,380,580,450,610,535,630,560,650,620,680,670,700,720,740,785,765,830,790,842,805,830,830,810,860,803,900,805,930,818,968,800,985,840,1011,903], '#707070');
  s.poly([22,727,50,700,75,685,130,665,200,630,260,600,300,597,360,582,440,557,520,542,545,547,600,568,640,582,700,622,785,670,850,673,930,688,970,692,1011,725], '#78b898', 1.2);
  s.poly([22,355,50,338,70,330,100,327,120,335,150,332,200,322,250,312,265,316,285,330,330,342,390,345,430,342,490,348,520,355,545,372,600,450,640,480,700,560,785,670,815,673,850,675,940,707,970,715,1011,773], '#d0d0d0', 1.2);
  s.poly([22,55,50,70,75,115,105,180,125,248,150,265,230,258,255,250,270,275,290,335,310,370,330,393,370,375,395,375,430,345,450,358,495,360,520,385,545,440,570,580,605,710,620,712,640,755,665,815,690,860,700,925,720,975,755,1000,775,1027,795,1010,820,930,830,860,850,840,870,828,895,835,910,830,930,845,950,830,967,810,975,830,985,905,1005,1005,1011,1015], '#b460bc', 1.2);
  [[80,282,98,285,110,300,118,370,127,417],[262,352,272,360,283,450,292,458,300,430,308,437],[440,503,455,455,470,425,488,412],[619,705,632,740,640,795,655,870,668,897],[803,830,815,770,832,715,840,705,848,720],[980,1160,988,1225,1000,1270,1008,1272,1012,1262]].forEach(p => s.poly(p, '#f0a010', 1.5));
  s.dots([58,51,245,118,171,222,209,204,297,257,335,264,432,179,462,299,619,625,576,729,822,558,965,656,755,985], '#18e4ec', 2.5);
  s.dots([73,518,193,299,126,643,283,681,388,443,440,628,612,1030,583,1098,769,1201,875,935,927,955,695,1381], '#e614e6', 2.5);
  [['$686.11',134],['Gap Top ($681.32)',500],['$679.96',604],['$678.99',680],['$676.54',864],['Gap Top ($675.94)',910],['$673.8',1073],['$670.87',1300]].forEach(l => s.text(l[0], 1397, l[1], '#808080', 'end'));
  s.text('wk&#160; ($671)', 1397, 1289, '#d0b830', 'end');
  brand(s, 0, 'DayRange: 8.66 vs. ATR:6.96', 127, '#4c4c4c');
  series(s, 16, 76.1, Array.from({ length: 21 }, (_, i) => [13, 15].includes(i) ? '' : String(688 - i)));
  s.tag('679.57', 653, '#10f0f8', '#044'); s.tag('678.67', 722, '#90ecc0', '#143'); s.tag('678.01', 772, '#fff', '#333');
  s.tag('676.33', 902, '#808080', '#fff'); s.tag('675.65', 952, '#f414f4', '#fff'); s.tag('674.86', 1012, '#f060f0', '#404');
  s.tag('672.6', 1186, '#14b43c', '#fff'); s.tag('671.65', 1259, '#f8a010', '#420');
  s.end();

  s = surface(q('m1'), [522, 616, 546, 95], 496, [515, 590, 2.851]);
  s.hgrid([136, 236, 337]); s.vgrid(M_VERT);
  s.line(20, 85, 1440, 85, '#e0d8a0'); s.line(20, 286, 1440, 286, '#f0e8b0');
  zones(s, [20,205,28,188,43,215,60,197,68,245,77,222,88,238,97,222,107,222,120,280,127,205,140,203,150,188,162,183,168,192,193,190,197,198,210,175,232,188,238,172,246,173,254,220,263,197,278,265,292,215,300,222,320,222,330,227,338,170,350,183,362,183,382,208,395,158,412,157,420,168,428,162,433,213,441,217,455,178,475,190,492,195,508,235,515,240,526,275,540,283,548,322,565,327,578,355,585,282,605,283,614,207,630,212,638,255,645,250,655,268,668,255,682,273,697,318,703,262,711,220,719,235,735,212,742,228,751,205,758,207,765,242,780,202,795,158,808,120,822,105,832,115,840,173,852,168,862,157,873,190,890,177,900,175,912,195,922,208,940,170,948,160,953,160,960,143,967,160,975,250,985,290,990,303,1000,265,1011,237], 276, 0);
  s.label('60', 137); s.label('20', 338);
  s.tag('40.6462', 231, '#808080', '#fff'); s.tag('30', 284, '#f4e6a8', '#333');
  s.end();

  s = surface(q('m2'), [522, 732, 546, 93], 496, [515, 590, 2.851]);
  s.hgrid([607]); s.vgrid(M_VERT);
  hist(s, [20,515,40,525,70,545,100,545,120,566,130,545,145,525,160,502,185,495,215,495,245,500,258,515,270,535,285,550,310,540,330,525,338,505,360,498,385,500,405,492,425,495,438,518,470,521,500,528,530,545,545,568,575,583,605,545,617,512,628,504,640,515,665,520,680,523,697,546,715,525,730,505,755,490,775,498,790,472,822,432,832,445,850,475,870,505,885,520,905,528,930,540,945,522,960,508,970,518,985,585,1000,600,1011,583], 520, 7.5);
  s.line(20, 520, 1440, 520, '#b858c0');
  s.poly([20,514,35,520,60,530,90,557,115,590,135,604,155,604,185,585,215,560,245,543,265,542,290,565,315,580,333,585,360,570,395,552,430,527,490,524,520,540,545,560,575,615,605,658,620,663,650,658,682,656,710,677,725,675,750,655,785,630,800,605,820,545,845,495,870,477,895,478,915,492,935,497,965,497,985,525,1011,583], '#c4b88a', 1.2);
  s.poly([20,514,33,520,50,540,62,540,75,570,90,593,105,596,120,637,145,605,170,572,185,565,195,550,215,543,245,527,260,535,280,593,300,597,330,596,345,568,368,547,390,547,410,515,430,510,437,523,490,523,510,540,540,585,560,650,580,690,606,692,618,653,630,646,650,655,682,656,700,697,718,672,745,640,755,622,765,628,780,613,795,570,808,520,820,465,830,440,848,453,863,453,878,477,900,480,915,497,930,512,945,508,953,495,965,490,972,505,985,590,1000,635,1011,647], '#20b8c0', 1.2);
  s.label('1', 432); s.label('-1', 610); s.label('-2', 697);
  s.tag('0', 517, '#f060f0', '#fff'); s.tag('-0.7368', 582, '#f4e6a8', '#333'); s.tag('-1.4169', 642, '#10f0f8', '#055');
  s.end();

  s = surface(q('m3'), [522, 825, 546, 17], 546, [515, 590, 2.851]);
  [['Fri', 184], ['Sun', 333], ['Mon', 429], ['Tue', 543], ['Wed', 723], ['Thu', 903], ['Fri', 1083], ['Sat', 1262], ['Mon', 1352]].forEach(l => s.text(l[0], l[1], 730, '#a0a0a0'));
  finishTime(q('m3'), s);
}

/* ---------- right panel ---------- */
const R_VERT = [85, 636, 1185];
function right() {
  const q = p => document.querySelector(`[data-pane=${p}]`);
  const f = y => [1070, y, 2.958];
  let s = surface(q('r0'), [1075, 69, 525, 366], 479, f(80));
  s.rect(0, -40, 1440, 1080, '#323232');
  [[302, 450], [852, 1003], [1402, 1440]].forEach(b => s.rect(b[0], -40, b[1], 1080, '#0a0a0a'));
  s.rect(107, 138, 1003, 383, '#fff', .09);
  s.raw(`<linearGradient id="rb" x2="0" y2="1"><stop offset="0" stop-color="#a08a6a" stop-opacity=".36"/><stop offset="1" stop-color="#7a6a5a" stop-opacity="0"/></linearGradient><linearGradient id="rt" x2="0" y2="1"><stop offset="0" stop-color="#409c96"/><stop offset="1" stop-color="#268482"/></linearGradient>`);
  s.rect(1005, -40, 1440, 400, 'url(#rb)');
  const prof = [-40,1407,-25,1380,-15,1340,0,1340,10,1385,20,1350,28,1300,40,1275,50,1240,58,1150,75,1140,82,1180,95,1170,105,1200,115,1260,125,1300,135,1360,143,1310,150,1230,165,1180,180,1160,195,1190,205,1205,220,1140,245,1125,260,1160,275,1190,285,1230,295,1287,308,1265,320,1240,330,1215,345,1205,357,1220,370,1180,385,1155,400,1200,410,1230,420,1280,435,1300,445,1313,457,1270,470,1290,480,1313,490,1260,505,1230,520,1190,530,1140,540,1090,555,1100,565,1060,590,1058,605,1075,645,1092,660,1080,680,1055,695,1035,705,1070,718,1100,735,1130,750,1150,765,1140,778,1115,790,1080,805,1085,815,1075,825,1090,835,1075,890,1060,905,1035,920,1018];
  profile(s, 1005, prof, 937, 'url(#rt)');
  for (let y = -28; y < 930; y += 17) {
    let e = 1018; for (let i = 0; i < prof.length; i += 2) if (prof[i] <= y) e = prof[i + 1];
    s.line(1005, y, e, y, '#28787a');
  }
  s.hgrid([28, 301, 437, 574, 710, 847, 983]);
  s.vgrid(R_VERT, '#5c5c5c'); s.vgrid([107, 658, 1208], '#606060', '8 4');
  [73, 165, 232, 401, 441, 586, 793].forEach(y => s.line(14, y, 1440, y, '#808080'));
  s.line(14, 781, 1440, 781, '#c0a824', 1, '4 5'); s.line(980, 409, 1440, 409, '#e8e0a0');
  s.poly([17,510,30,530,60,545,130,550,180,540,220,555,260,560,310,530,360,465,400,375,440,335,480,320,530,325,580,345,640,340,720,362,800,330,840,310,870,340,900,430,930,505,960,545,978,557], '#6a6a6a');
  const wicks = [62,525,560,RED,201,503,570,RED,223,640,681,RED,303,480,561,RED,342,270,384,GREEN,318,292,400,RED,454,300,360,RED,528,330,420,RED,545,280,400,RED,550,370,443,RED,716,400,461,RED,874,470,640,GREEN,917,800,934,GREEN,892,710,790,GREEN,937,765,905,RED,970,595,680,RED,154,540,608,GREEN];
  for (let i = 0; i < wicks.length; i += 4) s.line(wicks[i], wicks[i + 1], wicks[i], wicks[i + 2], wicks[i + 3]);
  seed = 23;
  walk(s, [20,770,26,800,32,690,42,600,52,570,60,530,68,570,80,580,90,520,104,590,112,520,122,500,135,560,152,580,160,525,172,500,185,540,200,550,212,570,218,670,224,670,235,610,248,570,262,530,272,530,285,450,297,490,308,540,313,350,325,310,335,300,342,360,350,260,360,200,370,170,376,120,385,155,398,120,412,150,425,150,435,140,445,220,450,350,465,310,485,305,500,310,517,265,525,300,530,400,540,350,548,380,552,430,562,380,572,415,585,340,600,335,622,320,640,325,655,360,670,380,688,360,700,420,715,440,722,420,733,330,748,310,762,270,772,285,785,290,800,260,815,240,832,215,840,240,848,350,856,430,866,620,874,560,882,780,892,740,902,870,912,900,920,860,930,780,940,870,948,760,958,680,966,620,972,650,978,670], 5.75, 2, 18, 22);
  s.poly([17,625,35,655,60,625,95,595,130,575,160,560,190,545,215,565,245,578,270,560,305,525,330,480,360,390,385,310,410,245,440,205,455,230,500,275,530,290,570,345,600,340,640,335,700,365,730,385,760,350,800,310,835,275,850,300,870,420,895,540,915,620,940,680,960,690,978,678], '#c47488');
  [[320,425,350,365,380,320,410,290,445,270], [865,490,885,570,905,640,930,680,950,693,978,692]].forEach(p => s.poly(p, '#c48a20'));
  s.poly([17,715,27,735,40,690,55,640,70,595,90,575,105,570,122,545,145,557,175,530,200,540,215,570,235,592,250,588,265,560,290,510,303,510,320,420,345,370,365,285,385,210,405,165,430,150,440,155,455,215,470,260,490,290,515,290,545,350,575,378,600,350,640,335,660,345,690,365,715,405,725,405,745,350,765,320,785,300,810,270,832,243,842,265,852,340,865,430,875,540,890,650,905,725,925,780,940,795,955,765,965,720,978,700], '#30c4d0');
  balloon(s, 'Lo: 668.72', 983, 979, 917, 934, '#e8e8e8', '#333', 53);
  s.dots([62,525,119,490,176,485,201,503,372,104,395,104,516,259,545,280,624,302,689,342,763,259,832,191], '#18e4ec', 2.5);
  s.dots([81,607,102,604,154,608,176,580,223,681,303,561,342,384,406,179,454,360,499,350,528,420,550,443,716,461,785,299,917,934], '#f010f0', 2.5);
  [['Gap Top ($681.32)',49],['$679.96',141],['$678.99',209],['$676.54',377],['Gap Top ($675.94)',418],['$673.8',563],['$670.87',771]].forEach(l => s.text(l[0], 1395, l[1], '#7c7c7c', 'end'));
  s.text('wk&#160; ($671)', 1395, 757, '#c4a824', 'end');
  brand(s, 0, 'DayRange: 4.57 vs. ATR:3.69', 127, '#4e4e4e');
  series(s, 28, 136.7, ['682', '680', '678', '676', '674', '672', '670', '668']);
  s.tag('679.57', 189, '#10f0f8', '#044'); s.tag('678.56', 258, '#555', '#fff'); s.tag('676.41', 405, '#f4e6a8', '#333');
  s.tag('674.23', 553, '#808080', '#fff'); s.tag('672.6', 666, '#ff5f5f', '#400'); s.tag('668.72', 932, '#f414f4', '#fff');
  s.end();

  const millions = y => s.over(`<text transform="translate(${s.W - 1} ${s.Y(y)}) rotate(-90)" fill="#999" text-anchor="middle">&lt;millions&gt;</text>`);

  s = surface(q('r1'), [1075, 456, 525, 71], 479, f(430));
  s.hgrid([97, 146, 196, 244]); s.vgrid(R_VERT);
  const v1 = [195,222,217,222,255,255,252,257,258,243,262,265,250,270,270,275,270,277,252,270,275,275,258,262,225,85,178], v2 = [210,262,183,222,275,207,210,240,240,245,244,248,250,244,258,252,237,265,264,265,246,258,244];
  v1.forEach((y, i) => s.line(304 + i * 5.8, 290, 304 + i * 5.8, y, i > 22 || i % 5 === 0 || i === 2 ? '#c45858' : '#148c34', i > 22 ? 1.5 : 1));
  v2.forEach((y, i) => s.line(853 + i * 5.4, 290, 853 + i * 5.4, y, [3, 6, 7, 11, 12, 17, 18, 19, 20].includes(i) ? '#148c34' : '#c45858'));
  [[17,265,30,265,40,268,80,277,100,280,180,290],[303,290,370,283,440,275,455,268,585,268,605,273,650,280,735,290],[860,290,900,282,950,275,978,272]].forEach(p => s.poly(p, '#b0a878'));
  s.label('8', 98); s.label('6', 147); s.label('4', 197); s.label('2', 245); s.label('0', 288); millions(185);
  s.end();

  s = surface(q('r2'), [1075, 548, 525, 93], 479, f(430));
  s.hgrid([366, 496]); s.vgrid(R_VERT);
  s.poly([17,593,35,594,50,600,100,606,160,615,260,625], '#777'); s.poly([460,596,585,596,610,604,690,613,740,622], '#777');
  [[303,525],[313,560],[330,570],[375,560],[405,580],[440,500],[452,480],[866,508],[895,565],[930,560],[965,570]].forEach(p => s.line(p[0], p[1], p[0], 615, '#1a1a90'));
  s.poly([300,625,303,547,310,615,330,600,345,622,380,615,436,605,442,572,448,412,454,527,460,615], '#c01010');
  s.poly([446,420,450,610,442,560], '#4a10a0', 2);
  s.poly([850,615,856,550,863,548,877,537,884,552,890,605], '#c01010');
  s.dots([303,547,310,618,318,610,345,622,358,620,368,622,390,608,415,618,428,600,436,590,442,572,448,412,454,527,260,624,281,624,825,624,856,551,864,548,877,537,883,552,870,600,896,610,907,582,925,625,935,577,945,612,965,620], '#f01010', 3);
  const base = []; for (let x = 20; x < 300; x += 5.5) base.push(x, 625); for (let x = 465; x < 850; x += 5.5) base.push(x, 625);
  s.dots(base, '#00f800', 2.5);
  const open = [303,600,311,556,320,564,318,602,328,600,334,597,338,615,345,587,352,587,357,600,362,605,368,595,373,587,380,600,385,610,392,605,400,608,406,598,412,610,420,615,430,610,436,603,444,600,450,610,456,600,462,615];
  const open2 = [855,611,860,620,866,583,873,574,880,605,890,590,895,580,900,605,907,612,912,600,920,595,926,587,932,610,938,600,948,603,955,615,960,578,966,590,968,600,977,622];
  s.poly(open, '#00d800'); s.poly(open2, '#00d800');
  s.dots(open.concat(open2, 498, 621, 516, 622), '#00f800', 2.7);
  let bx = +s.X(24);
  [['This: 334,788', 58, '#ff0', '#222'], ['Last: 2,008,491', 69, '#ff0', '#222'], ['Sellers Volume &gt; Buyers Volume', 150, '#f00', '#400'], ['Buyer %: 7.21%', 72, '#0f0', '#042'], ['Seller %: 18.53%', 76, '#f00', '#400']].forEach(([t, w, bg, fg]) => {
    s.raw(`<rect x="${bx}" y="${s.Y(360)}" width="${w}" height="16" fill="${bg}"/><text class="bold" x="${bx + w / 2}" y="${+s.Y(385) + 3}" text-anchor="middle" fill="${fg}">${t}</text>`); bx += w + 1;
  });
  s.label('10', 366); s.label('5', 496); s.label('0', 624); s.tag('0.96611', 598, '#8c8c8c', '#fff'); millions(494);
  s.end();

  s = surface(q('r3'), [1075, 662, 525, 71], 479, f(640));
  s.hgrid([130, 199]); s.vgrid(R_VERT);
  s.line(14, 94, 1440, 94, '#c8bc78'); s.line(14, 237, 1440, 237, '#908450', 2);
  zones(s, [17,258,25,262,32,200,42,150,57,130,65,155,80,155,88,140,95,152,105,130,115,135,135,160,148,165,158,142,172,140,180,148,195,158,205,172,212,178,218,230,225,205,235,170,248,175,258,140,270,148,283,108,293,125,303,167,312,98,322,110,333,98,338,128,345,98,360,85,374,71,380,90,403,82,410,98,430,100,440,125,448,200,458,205,465,185,485,180,492,183,500,190,516,155,522,195,530,210,538,190,548,215,558,193,570,205,585,170,592,163,600,170,620,155,637,153,648,180,665,195,680,195,690,180,697,213,705,213,712,222,722,200,732,140,745,128,750,135,760,112,775,125,790,118,795,135,808,110,825,95,832,110,843,170,852,215,866,272,874,225,880,262,897,250,907,268,915,250,928,215,935,232,948,185,955,185,965,160,978,172], 236, 96);
  s.label('60', 131); s.label('40', 201); s.label('20', 271);
  s.tag('70', 91, '#f4e6a8', '#333'); s.tag('48.2045', 168, '#808080', '#fff'); s.tag('30', 234, '#f4e6a8', '#333');
  s.end();

  s = surface(q('r4'), [1075, 754, 525, 71], 479, f(640));
  s.hgrid([374, 485, 543]); s.vgrid(R_VERT);
  hist(s, [17,440,28,438,38,415,55,403,75,408,100,415,120,424,140,430,160,428,190,430,210,437,225,440,240,436,260,425,290,415,310,408,340,412,375,408,400,424,415,432,430,440,457,460,480,448,510,440,545,440,570,435,590,422,620,419,645,430,690,435,715,438,735,422,765,415,800,420,835,428,850,435,865,462,885,475,910,470,935,440,945,420,960,405,978,400], 430, 5.8);
  s.line(14, 430, 1440, 430, '#c050c8');
  s.poly([17,487,35,492,50,490,80,460,110,435,140,425,160,418,195,418,225,430,250,434,275,425,310,418,340,395,375,365,405,353,435,358,455,370,480,400,515,428,545,438,580,450,610,442,650,432,690,440,730,445,765,423,800,412,835,405,855,412,880,445,905,500,925,527,950,530,965,515,978,502], '#d0c49a', 1.2);
  s.poly([17,505,27,505,45,480,65,445,85,428,105,420,125,412,145,418,190,416,205,420,220,438,240,440,265,430,290,410,303,412,325,385,345,373,370,352,400,347,430,360,445,375,460,410,480,433,515,437,540,450,570,457,600,440,640,430,670,437,715,450,735,430,765,412,795,410,830,402,850,410,870,470,885,520,900,545,918,550,945,535,960,505,970,478,978,474], '#20c0c8', 1.2);
  s.label('1', 376); s.label('0', 431); s.label('-1', 487); s.label('-2', 544);
  s.tag('0.49209', 399, '#0c7014', '#fff'); s.tag('-0.7883', 471, '#10f0f8', '#055');
  s.end();

  s = surface(q('r5'), [1075, 825, 525, 17], 525, f(640));
  [['Wed', 85], ['Thu', 636], ['Fri', 1185]].forEach(l => s.text(l[0], l[1], 580, '#a0a0a0'));
  finishTime(q('r5'), s);
}

function draw() { left(); middle(); right(); }
draw();
window.addEventListener('resize', draw);
```
